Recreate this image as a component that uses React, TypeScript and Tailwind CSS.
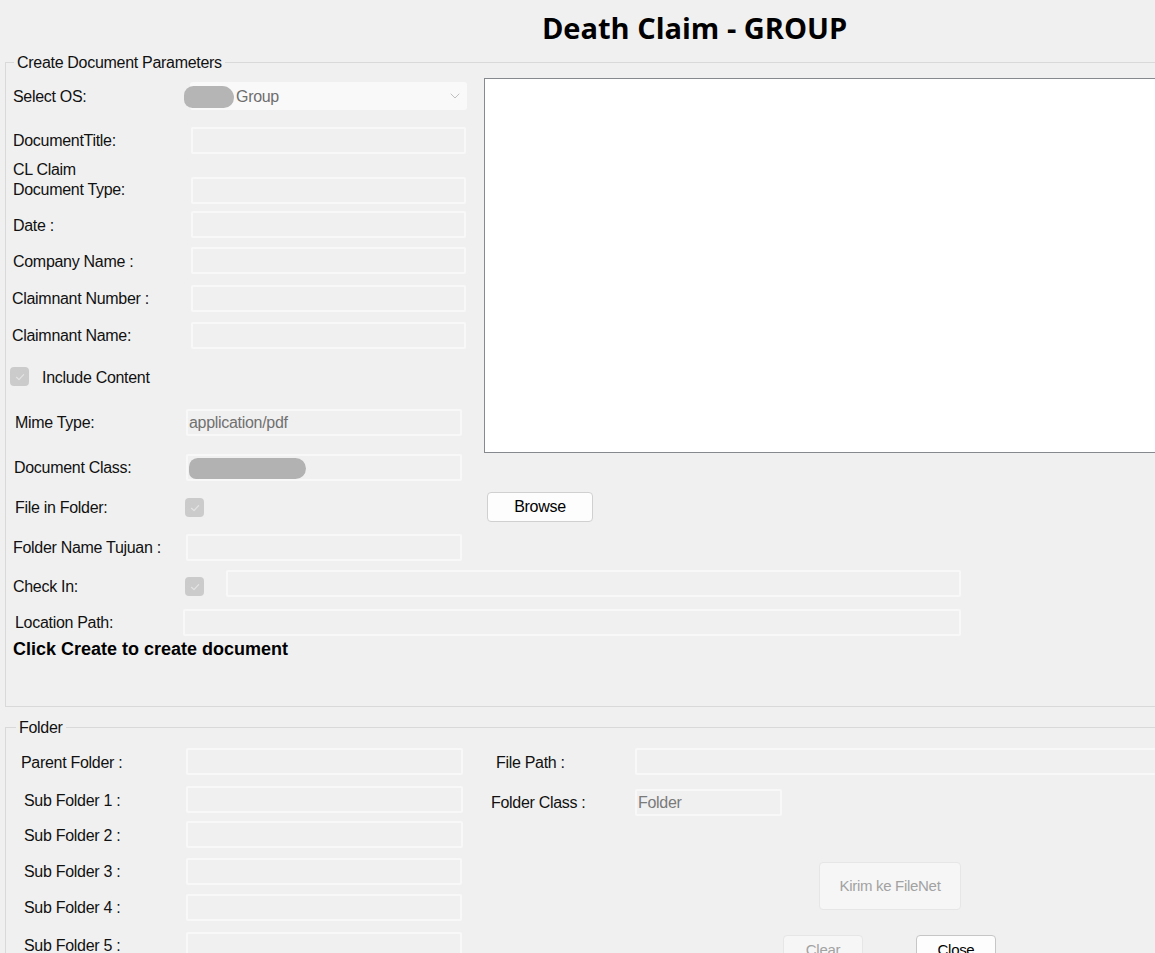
import React from 'react';
import { ChevronDown } from 'lucide-react';

const field = 'h-[27px] border-2 border-[#f8f8f8] bg-[#f0f0f0] rounded-[2px]';

function Check() {
  return (
    <div className="w-[19px] h-[19px] rounded-[4px] bg-[#cbcbcb] flex items-center justify-center">
      <svg width="12" height="12" viewBox="0 0 12 12" fill="none">
        <path d="M2.5 6.3 L5 8.6 L9.6 3.6" stroke="#e4e4e4" strokeWidth="1.2" strokeLinecap="round" strokeLinejoin="round" />
      </svg>
    </div>
  );
}

export default function App() {
  return (
    <div className="w-[1155px] h-[953px] overflow-hidden bg-[#f0f0f0] text-[#111] font-['Liberation_Sans',Arial,sans-serif] text-[16px] leading-[18px] tracking-[-0.3px]">
      {/* title */}
      <div className="h-[62px] pl-[234px] pt-[10px] text-center">
        <h1 className="font-['Open_Sans',sans-serif] font-bold text-[29px] leading-[36px] tracking-normal text-black">
          Death Claim - GROUP
        </h1>
      </div>

      {/* Create Document Parameters */}
      <div className="relative ml-[5px] w-[1170px] h-[645px] border-l border-t border-b border-[#d9d9d9] flex flex-col">
        <span className="absolute top-[-9px] left-[8px] px-[3px] bg-[#f0f0f0]">Create Document Parameters</span>

        <div className="flex">
          <div className="w-[478px] flex flex-col">
            <div className="mt-[19px] h-[28px] flex items-center">
              <span className="ml-[7px] w-[177px] pt-[2px]">Select OS:</span>
              <div className="relative w-[277px] h-[28px] bg-[#f9f9f9] rounded-[3px] flex items-center">
                <span className="absolute left-[-6px] top-[4px] w-[50px] h-[22px] rounded-[11px_14px_12px_10px] bg-[#b5b5b5] blur-[0.6px]" />
                <span className="ml-[46px] pt-[1px] text-[#6e6e6e]">Group</span>
                <ChevronDown className="ml-auto mr-[4px] text-[#a3a3a3]" size={16} strokeWidth={1} />
              </div>
            </div>

            <div className="mt-[17px] flex items-center">
              <span className="ml-[7px] w-[178px]">DocumentTitle:</span>
              <div className={`${field} w-[275px]`} />
            </div>

            <div className="mt-[6px] h-[44px] flex">
              <span className="ml-[7px] w-[178px] leading-[20px]">
                CL Claim
                <br />
                Document Type:
              </span>
              <div className={`${field} w-[275px] self-end`} />
            </div>

            <div className="mt-[7px] flex items-center">
              <span className="ml-[7px] w-[178px] pt-[2px]">Date :</span>
              <div className={`${field} w-[275px]`} />
            </div>

            <div className="mt-[9px] flex items-center">
              <span className="ml-[7px] w-[178px] pt-[2px]">Company Name :</span>
              <div className={`${field} w-[275px]`} />
            </div>

            <div className="mt-[11px] flex items-center">
              <span className="ml-[6px] w-[179px]">Claimnant Number :</span>
              <div className={`${field} w-[275px]`} />
            </div>

            <div className="mt-[10px] flex items-center">
              <span className="ml-[6px] w-[179px]">Claimnant Name:</span>
              <div className={`${field} w-[275px]`} />
            </div>

            <div className="mt-[18px] h-[19px] flex items-center">
              <div className="ml-[4px]">
                <Check />
              </div>
              <span className="ml-[13px] pt-[2px]">Include Content</span>
            </div>

            <div className="mt-[23px] flex items-center">
              <span className="ml-[9px] w-[171px]">Mime Type:</span>
              <div className={`${field} w-[276px] flex items-center pl-[1px] text-[#707070]`}>application/pdf</div>
            </div>

            <div className="mt-[18px] flex items-center">
              <span className="ml-[8px] w-[172px]">Document Class:</span>
              <div className={`${field} relative w-[276px]`}>
                <span className="absolute left-[1px] top-[2px] w-[117px] h-[21px] rounded-[10px_12px_12px_8px] bg-[#b2b2b2] blur-[0.6px]" />
              </div>
            </div>

            <div className="mt-[17px] h-[19px] flex items-center">
              <span className="ml-[9px] w-[170px] pt-[1px]">File in Folder:</span>
              <Check />
            </div>

            <div className="mt-[17px] flex items-center">
              <span className="ml-[7px] w-[173px]">Folder Name Tujuan :</span>
              <div className={`${field} w-[276px]`} />
            </div>
          </div>

          <div className="flex-1 flex flex-col items-start">
            <div className="mt-[15px] w-full h-[375px] bg-white border border-[#868a8f]" />
            <button className="mt-[39px] ml-[3px] w-[106px] h-[30px] rounded-[4px] border border-[#d0d0d0] bg-[#fdfdfd] text-black">
              Browse
            </button>
          </div>
        </div>

        <div className="mt-[9px] h-[27px] flex items-end">
          <span className="ml-[7px] w-[172px] mb-[1px]">Check In:</span>
          <div className="mb-[1px]">
            <Check />
          </div>
          <div className={`${field} ml-[22px] w-[735px] self-start`} />
        </div>

        <div className="mt-[12px] flex items-center">
          <span className="ml-[9px] w-[168px]">Location Path:</span>
          <div className={`${field} w-[778px]`} />
        </div>

        <p className="mt-[4px] ml-[7px] font-bold text-[18px] tracking-normal text-black">Click Create to create document</p>
      </div>

      {/* Folder */}
      <div className="relative mt-[20px] ml-[5px] w-[1170px] h-[400px] border-l border-t border-[#d9d9d9] flex">
        <span className="absolute top-[-9px] left-[10px] px-[3px] bg-[#f0f0f0]">Folder</span>

        <div className="w-[474px] flex flex-col">
          <div className="mt-[20px] flex items-center">
            <span className="ml-[15px] w-[165px] pt-[2px]">Parent Folder :</span>
            <div className={`${field} w-[277px]`} />
          </div>
          <div className="mt-[11px] flex items-center">
            <span className="ml-[18px] w-[162px] pt-[2px]">Sub Folder 1 :</span>
            <div className={`${field} w-[277px]`} />
          </div>
          <div className="mt-[8px] flex items-center">
            <span className="ml-[18px] w-[162px] pt-[2px]">Sub Folder 2 :</span>
            <div className={`${field} w-[277px]`} />
          </div>
          <div className="mt-[10px] flex items-center">
            <span className="ml-[18px] w-[162px]">Sub Folder 3 :</span>
            <div className={`${field} w-[276px]`} />
          </div>
          <div className="mt-[9px] flex items-center">
            <span className="ml-[18px] w-[162px]">Sub Folder 4 :</span>
            <div className={`${field} w-[276px]`} />
          </div>
          <div className="mt-[11px] flex items-center">
            <span className="ml-[18px] w-[162px]">Sub Folder 5 :</span>
            <div className={`${field} w-[276px]`} />
          </div>
        </div>

        <div className="flex-1 flex flex-col">
          <div className="mt-[20px] flex items-center">
            <span className="ml-[17px] w-[139px] pt-[2px]">File Path :</span>
            <div className={`${field} w-[540px]`} />
          </div>
          <div className="mt-[14px] flex items-center">
            <span className="ml-[12px] w-[144px]">Folder Class :</span>
            <div className={`${field} w-[147px] flex items-center pl-[1px] text-[#7a7a7a]`}>Folder</div>
          </div>
          <button className="mt-[46px] ml-[340px] w-[142px] h-[48px] rounded-[4px] border border-[#e6e6e6] bg-[#f6f6f6] text-[15px] text-[#a2a2a2]">
            Kirim ke FileNet
          </button>
          <div className="mt-[25px] flex">
            <button className="ml-[304px] w-[80px] h-[30px] rounded-[4px] border border-[#e6e6e6] bg-[#f6f6f6] text-[15px] text-[#a2a2a2]">
              Clear
            </button>
            <button className="ml-[53px] w-[80px] h-[30px] rounded-[4px] border border-[#c6c6c6] bg-[#fdfdfd] text-[15px] text-black">
              Close
            </button>
          </div>
        </div>
      </div>
    </div>
  );
}
